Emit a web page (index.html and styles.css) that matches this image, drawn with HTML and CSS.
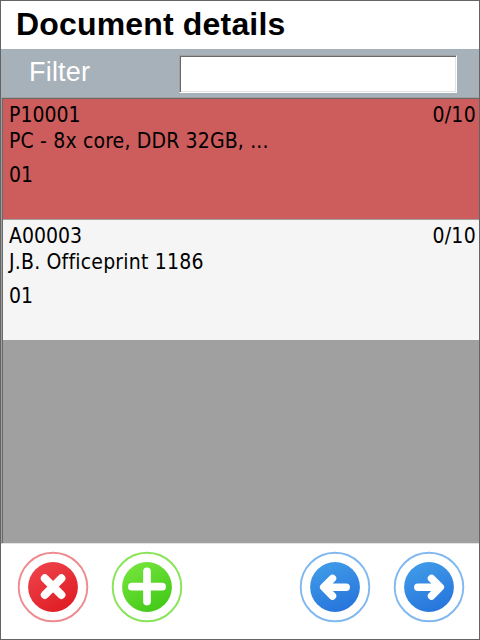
FILE: index.html
```
<!DOCTYPE html>
<html lang="en">
<head>
<meta charset="utf-8">
<title>Document details</title>
<link rel="stylesheet" href="styles.css">
</head>
<body>
<main class="window">
  <h1 class="title"><span>Document details</span></h1>
  <div class="filter">
    <label class="filter-label" for="filter">Filter</label>
    <input class="filter-input" id="filter" type="text">
  </div>
  <section class="list">
    <article class="row row-open">
      <div class="head"><span>P10001</span><span class="count">0/10</span></div>
      <div class="name name-pc">PC - 8x core, DDR 32GB, ...</div>
      <div class="place">01</div>
    </article>
    <article class="row">
      <div class="head"><span>A00003</span><span class="count">0/10</span></div>
      <div class="name name-print">J.B. Officeprint 1186</div>
      <div class="place">01</div>
    </article>
  </section>
  <footer class="actions">
    <button class="action" aria-label="Cancel">
      <svg viewBox="0 0 72 72" width="72" height="72">
        <defs><linearGradient id="red" x1="0.2" y1="0" x2="0.8" y2="1"><stop offset="0" stop-color="#ee434b"/><stop offset="1" stop-color="#df1b22"/></linearGradient></defs>
        <circle cx="36" cy="36" r="34.3" fill="#fff" stroke="#ee8b8f" stroke-width="1.9"/>
        <circle cx="36" cy="36" r="24.9" fill="url(#red)"/>
        <path d="M27.8 27.3L44.4 43.9M44.4 27.3L27.8 43.9" stroke="#fff" stroke-width="8" stroke-linecap="round"/>
      </svg>
    </button>
    <button class="action" aria-label="Add">
      <svg viewBox="0 0 72 72" width="72" height="72">
        <defs><linearGradient id="green" x1="0.2" y1="0" x2="0.8" y2="1"><stop offset="0" stop-color="#76e53d"/><stop offset="1" stop-color="#40c816"/></linearGradient></defs>
        <circle cx="36" cy="36" r="34.3" fill="#fff" stroke="#88e457" stroke-width="1.9"/>
        <circle cx="36" cy="36" r="24.9" fill="url(#green)"/>
        <path d="M36 20.4V50.6M20.9 35.7H51.1" stroke="#fff" stroke-width="7.7" stroke-linecap="round"/>
      </svg>
    </button>
    <button class="action action-back" aria-label="Previous">
      <svg viewBox="0 0 72 72" width="72" height="72">
        <defs><linearGradient id="blue" x1="0.3" y1="0" x2="0.7" y2="1"><stop offset="0" stop-color="#409be8"/><stop offset="1" stop-color="#2674dc"/></linearGradient></defs>
        <circle cx="36" cy="36" r="34.3" fill="#fff" stroke="#80b8ef" stroke-width="1.9"/>
        <circle cx="36" cy="36" r="24.9" fill="url(#blue)"/>
        <path d="M33.5 27.4L24.7 36.2L33.5 45M25.2 36.2H47.2" fill="none" stroke="#fff" stroke-width="7.5" stroke-linecap="round" stroke-linejoin="round"/>
      </svg>
    </button>
    <button class="action" aria-label="Next">
      <svg viewBox="0 0 72 72" width="72" height="72">
        <circle cx="36" cy="36" r="34.3" fill="#fff" stroke="#80b8ef" stroke-width="1.9"/>
        <circle cx="36" cy="36" r="24.9" fill="url(#blue)"/>
        <path d="M38.5 27.4L47.3 36.2L38.5 45M46.8 36.2H24.8" fill="none" stroke="#fff" stroke-width="7.5" stroke-linecap="round" stroke-linejoin="round"/>
      </svg>
    </button>
  </footer>
</main>
</body>
</html>
```
FILE: styles.css
```
* {
  box-sizing: border-box;
}

body {
  margin: 0;
}

.window {
  display: grid;
  grid-template-rows: 48px 48px 447px 1fr;
  width: 480px;
  height: 640px;
  border: 1px solid #646464;
  background: #fff;
  color: #000;
}

.title {
  margin: 0;
  padding-left: 15px;
  font: bold 32px/46px "Liberation Sans", Arial, sans-serif;
  letter-spacing: 0.17px;
}

.filter {
  display: flex;
  align-items: flex-start;
  padding: 6px 22px 0 28px;
  background: #a7b1b9;
}

.filter-label {
  width: 150px;
  color: #fff;
  font: 27px/34px "Liberation Sans", Arial, sans-serif;
  letter-spacing: 0.2px;
}

.filter-input {
  width: 278px;
  height: 38px;
  padding: 0 4px;
  border: 1px solid #fff;
  border-top-color: #a0a0a0;
  border-left-color: #a0a0a0;
  border-radius: 0;
  outline: none;
  background: #fff;
  box-shadow: inset 1px 1px #696969, inset -1px -1px #e3e3e3;
  font: 22px "Liberation Sans", Arial, sans-serif;
}

.list {
  border: 1px solid #a0a0a0;
  border-right: 0;
  border-bottom-color: #e3e3e3;
  background: #a0a0a0;
  box-shadow: inset 1px 1px #696969;
  padding: 1px 0 0 1px;
  font: 21px/26px "DejaVu Sans Condensed", "DejaVu Sans", sans-serif;
  font-stretch: condensed;
  font-variant-ligatures: none;
}

.row {
  height: 121px;
  padding: 3px 3px 0 6px;
  border-bottom: 1px solid #a0a0a0;
  background: #f5f5f5;
}

.row-open {
  background: #cd5c5c;
}

.head {
  display: flex;
  justify-content: space-between;
}

.count {
  letter-spacing: 0.3px;
}

.name-pc {
  letter-spacing: 0.16px;
}

.name-print {
  letter-spacing: 0.2px;
}

.place {
  margin-top: 8px;
}

.actions {
  display: flex;
  gap: 22px;
  padding: 7px 14px 0 16px;
}

.action {
  width: 72px;
  height: 72px;
  padding: 0;
  border: 0;
  background: none;
}

.action svg {
  display: block;
}

.action-back {
  margin-left: auto;
}
```
